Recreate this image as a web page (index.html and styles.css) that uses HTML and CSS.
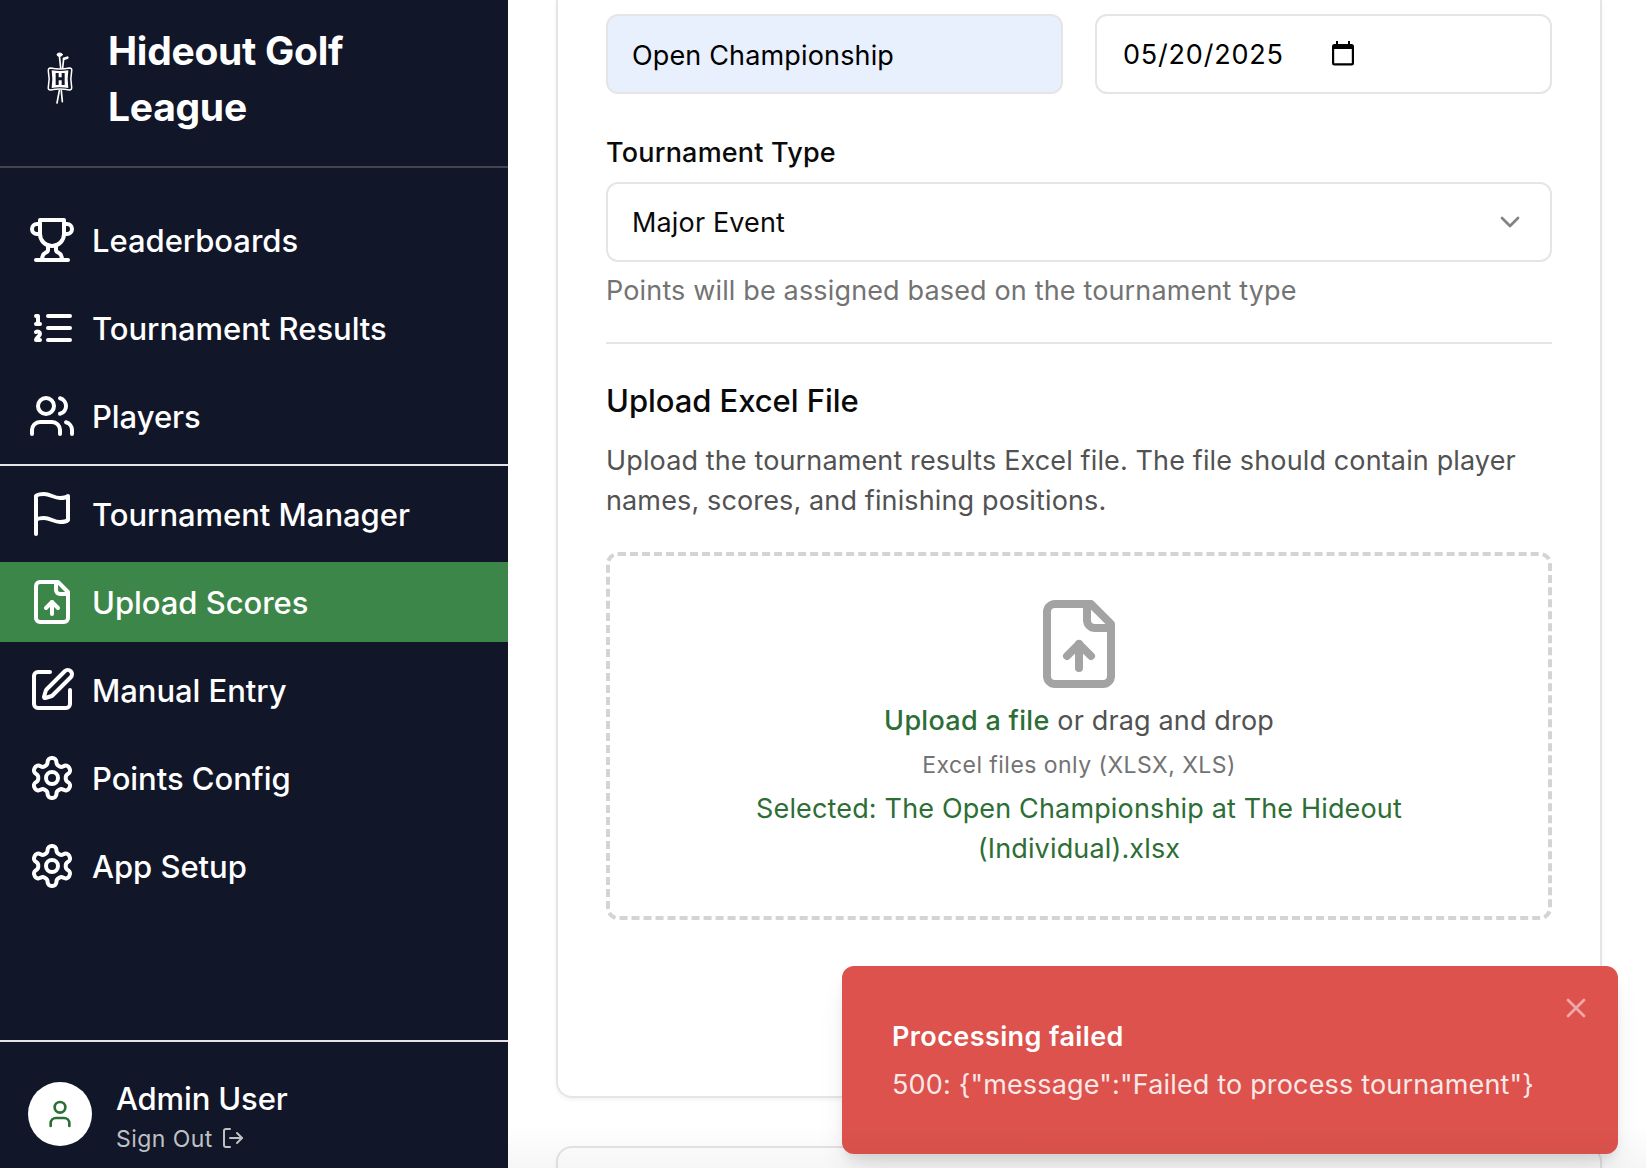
FILE: index.html
```html
<!DOCTYPE html>
<html lang="en">
<head>
<meta charset="utf-8">
<title>Hideout Golf League</title>
<link rel="stylesheet" href="styles.css">
</head>
<body>
<svg class="sprite" aria-hidden="true">
  <symbol id="trophy" viewBox="0 0 24 24"><path d="M6 9H4.5a2.5 2.5 0 0 1 0-5H6"/><path d="M18 9h1.5a2.5 2.5 0 0 0 0-5H18"/><path d="M4 22h16"/><path d="M10 14.66V17c0 .55-.47.98-.97 1.21C7.85 18.75 7 20.24 7 22"/><path d="M14 14.66V17c0 .55.47.98.97 1.21C16.15 18.75 17 20.24 17 22"/><path d="M18 2H6v7a6 6 0 0 0 12 0V2Z"/></symbol>
  <symbol id="list" viewBox="0 0 24 24"><path d="M10 6h11"/><path d="M10 12h11"/><path d="M10 18h11"/><path d="M4 6h1v4"/><path d="M4 10h2"/><path d="M6 18H4c0-1 2-2 2-3s-1-1.5-2-1"/></symbol>
  <symbol id="users" viewBox="0 0 24 24"><path d="M16 21v-2a4 4 0 0 0-4-4H6a4 4 0 0 0-4 4v2"/><circle cx="9" cy="7" r="4"/><path d="M22 21v-2a4 4 0 0 0-3-3.87"/><path d="M16 3.13a4 4 0 0 1 0 7.75"/></symbol>
  <symbol id="flag" viewBox="0 0 24 24"><path d="M4 15s1-1 4-1 5 2 8 2 4-1 4-1V3s-1 1-4 1-5-2-8-2-4 1-4 1z"/><path d="M4 22v-7"/></symbol>
  <symbol id="file-up" viewBox="0 0 24 24"><path d="M15 2H6a2 2 0 0 0-2 2v16a2 2 0 0 0 2 2h12a2 2 0 0 0 2-2V7Z"/><path d="M14 2v4a2 2 0 0 0 2 2h4"/><path d="M12 12v6"/><path d="m15 15-3-3-3 3"/></symbol>
  <symbol id="pen" viewBox="0 0 24 24"><path d="M11 3H5a2 2 0 0 0-2 2v14a2 2 0 0 0 2 2h14a2 2 0 0 0 2-2v-7"/><path d="M18.375 2.625a1 1 0 0 1 3 3l-9.013 9.014a2 2 0 0 1-.853.505l-2.873.84a.5.5 0 0 1-.62-.62l.84-2.873a2 2 0 0 1 .506-.852z"/></symbol>
  <symbol id="gear" viewBox="0 0 24 24"><path d="M12.22 2h-.44a2 2 0 0 0-2 2v.18a2 2 0 0 1-1 1.73l-.43.25a2 2 0 0 1-2 0l-.15-.08a2 2 0 0 0-2.73.73l-.22.38a2 2 0 0 0 .73 2.73l.15.1a2 2 0 0 1 1 1.72v.51a2 2 0 0 1-1 1.74l-.15.09a2 2 0 0 0-.73 2.73l.22.38a2 2 0 0 0 2.73.73l.15-.08a2 2 0 0 1 2 0l.43.25a2 2 0 0 1 1 1.73V20a2 2 0 0 0 2 2h.44a2 2 0 0 0 2-2v-.18a2 2 0 0 1 1-1.73l.43-.25a2 2 0 0 1 2 0l.15.08a2 2 0 0 0 2.73-.73l.22-.39a2 2 0 0 0-.73-2.73l-.15-.08a2 2 0 0 1-1-1.74v-.5a2 2 0 0 1 1-1.74l.15-.09a2 2 0 0 0 .73-2.73l-.22-.38a2 2 0 0 0-2.73-.73l-.15.08a2 2 0 0 1-2 0l-.43-.25a2 2 0 0 1-1-1.73V4a2 2 0 0 0-2-2z"/><circle cx="12" cy="12" r="3"/></symbol>
  <symbol id="user" viewBox="0 0 24 24"><path d="M19 21v-2a4 4 0 0 0-4-4H9a4 4 0 0 0-4 4v2"/><circle cx="12" cy="7" r="4"/></symbol>
  <symbol id="logout" viewBox="0 0 24 24"><path d="M9 21H5a2 2 0 0 1-2-2V5a2 2 0 0 1 2-2h4"/><path d="m16 17 5-5-5-5"/><path d="M21 12H9"/></symbol>
  <symbol id="chevron" viewBox="0 0 24 24"><path d="m6 9 6 6 6-6"/></symbol>
  <symbol id="close" viewBox="0 0 24 24"><path d="M18 6 6 18"/><path d="m6 6 12 12"/></symbol>
</svg>

<div class="app">
  <aside class="sidebar">
    <header class="brand">
      <svg class="logo" viewBox="-6 -3 192 240">
        <g fill="none" stroke="#fff" stroke-linecap="round">
          <path stroke-width="5" d="M88 46l4 38M101 56l-3 28M88 152l-7 37M94 152l3 33"/>
          <ellipse cx="89" cy="44" rx="8" ry="5" fill="#fff" stroke-width="3"/>
          <path stroke-width="8" d="M102 56l10-3"/>
          <path stroke-width="4.5" d="M62 84q28 6 56 0q9 0 7 9q-5 24 0 48q1 9-7 9q-28-6-56 0q-9 0-7-9q5-24 0-48q-1-9 7-9z"/>
        </g>
        <path fill="#fff" d="M65 91q25 4 50 0q-4 26 0 53q-25-4-50 0q4-27 0-53z"/>
        <path fill="#111628" d="M77 99h9v13h9v-13h9v36h-9v-14h-9v14h-9z"/>
      </svg>
      <h1 class="brand-name">Hideout Golf<br>League</h1>
    </header>
    <nav class="nav">
      <a class="nav-item"><svg class="icon"><use href="#trophy"/></svg><span>Leaderboards</span></a>
      <a class="nav-item"><svg class="icon"><use href="#list"/></svg><span>Tournament Results</span></a>
      <a class="nav-item"><svg class="icon"><use href="#users"/></svg><span>Players</span></a>
      <hr class="nav-divider">
      <a class="nav-item"><svg class="icon"><use href="#flag"/></svg><span>Tournament Manager</span></a>
      <a class="nav-item active"><svg class="icon"><use href="#file-up"/></svg><span>Upload Scores</span></a>
      <a class="nav-item"><svg class="icon"><use href="#pen"/></svg><span>Manual Entry</span></a>
      <a class="nav-item"><svg class="icon"><use href="#gear"/></svg><span>Points Config</span></a>
      <a class="nav-item"><svg class="icon"><use href="#gear"/></svg><span>App Setup</span></a>
    </nav>
    <footer class="account">
      <span class="avatar"><svg class="icon"><use href="#user"/></svg></span>
      <div>
        <div class="account-name">Admin User</div>
        <a class="sign-out"><span>Sign Out</span><svg class="icon"><use href="#logout"/></svg></a>
      </div>
    </footer>
  </aside>

  <main class="main">
    <section class="card">
      <div class="field-row">
        <div class="control autofilled"><span>Open Championship</span></div>
        <div class="control date"><span>05/20/2025</span>
          <svg class="calendar" viewBox="0 0 22 25"><path d="M4 0h2v3h10V0h2v3h1.500q2.500 0 2.500 2.500v16.500q0 2.500-2.500 2.500h-17q-2.500 0-2.500-2.500v-16.500q0-2.500 2.500-2.500H4zM2.200 8v14.200h17.600V8z"/></svg>
        </div>
      </div>
      <div class="label">Tournament Type</div>
      <div class="control select"><span>Major Event</span><svg class="icon"><use href="#chevron"/></svg></div>
      <p class="hint">Points will be assigned based on the tournament type</p>
      <hr class="rule">
      <h2 class="heading">Upload Excel File</h2>
      <p class="intro">Upload the tournament results Excel file. The file should contain player<br>names, scores, and finishing positions.</p>
      <div class="dropzone">
        <svg class="icon"><use href="#file-up"/></svg>
        <p class="drop-text"><span class="upload-link">Upload a file</span> or drag and drop</p>
        <p class="drop-note">Excel files only (XLSX, XLS)</p>
        <p class="drop-selected">Selected: The Open Championship at The Hideout<br>(Individual).xlsx</p>
      </div>
    </section>
    <section class="card next-card"></section>
  </main>
</div>

<div class="toast">
  <div class="toast-title">Processing failed</div>
  <div class="toast-text">500: {"message":"Failed to process tournament"}</div>
  <svg class="icon toast-close"><use href="#close"/></svg>
</div>
<div class="bottom-fade"></div>
</body>
</html>
```
FILE: styles.css
```css
* { box-sizing: border-box; }
body {
  position: relative;
  height: 1168px;
  margin: 0;
  overflow: hidden;
  background: #fff;
  color: #0a0a0a;
  font: 400 27px/40px Inter, "Liberation Sans", sans-serif;
  letter-spacing: 0.15px;
}
h1, h2, p { margin: 0; }
hr { width: 100%; height: 2px; margin: 0; border: 0; }
.sprite { display: none; }
.icon {
  display: block;
  flex: none;
  fill: none;
  stroke: currentColor;
  stroke-width: 2;
  stroke-linecap: round;
  stroke-linejoin: round;
}
.app { display: flex; height: 1168px; }

.sidebar {
  display: flex;
  flex-direction: column;
  flex: none;
  width: 508px;
  background: #111628;
  color: #fff;
}
.brand {
  display: flex;
  align-items: center;
  gap: 16px;
  height: 168px;
  padding: 23px 28px 31px;
  border-bottom: 2px solid #41454f;
}
.logo { flex: none; width: 64px; height: 80px; }
.brand-name {
  font-size: 39px;
  font-weight: 700;
  line-height: 56px;
  letter-spacing: -0.27px;
}
.nav { display: flex; flex-direction: column; gap: 8px; padding-top: 32px; }
.nav-item {
  display: flex;
  align-items: center;
  gap: 16px;
  height: 80px;
  padding: 0 28px;
  font-size: 31px;
  font-weight: 500;
  letter-spacing: -0.04px;
}
.nav-item span, .control span { padding-top: 2px; }
.nav-item .icon { width: 48px; height: 48px; }
.nav-item.active { background: #3d8649; }
.nav-divider { background: #e5e5e5; }
.account {
  display: flex;
  align-items: center;
  gap: 24px;
  height: 128px;
  margin-top: auto;
  padding: 32px 28px 14px;
  border-top: 2px solid #e8e2e4;
}
.avatar {
  display: flex;
  align-items: center;
  justify-content: center;
  width: 64px;
  height: 64px;
  border-radius: 50%;
  background: #fff;
  color: #2c6e35;
}
.avatar .icon { width: 32px; height: 32px; }
.account-name {
  padding-top: 1px;
  font-size: 31px;
  font-weight: 500;
  line-height: 47px;
  letter-spacing: -0.14px;
}
.sign-out {
  display: flex;
  align-items: center;
  gap: 8px;
  color: #bfc0c4;
  font-size: 23px;
  line-height: 32px;
  letter-spacing: 0.43px;
}
.sign-out span { height: 32px; padding-top: 1px; }
.sign-out .icon { width: 24px; height: 24px; }

.main { flex: 1; padding: 0 44px 0 48px; }
.card {
  height: 1098px;
  padding: 14px 48px 0;
  border: 2px solid #e5e5e5;
  border-top: 0;
  border-radius: 0 0 16px 16px;
  box-shadow: 0 2px 4px rgba(0, 0, 0, 0.05);
}
.next-card {
  height: 60px;
  margin-top: 48px;
  border-top: 2px solid #e5e5e5;
  border-radius: 16px;
}
.field-row { display: grid; grid-template-columns: 1fr 1fr; gap: 32px; }
.control {
  display: flex;
  align-items: center;
  height: 80px;
  padding: 0 24px;
  border: 2px solid #e5e5e5;
  border-radius: 12px;
}
.autofilled { padding-top: 1px; background: #e8effd; color: #000; }
.date { gap: 48px; padding-left: 26px; color: #000; letter-spacing: 0.8px; }
.calendar { width: 22px; height: 25px; margin-bottom: 2px; }
.label { margin: 45px 0 15px; font-weight: 500; line-height: 28px; letter-spacing: 0.2px; }
.select { justify-content: space-between; }
.select .icon { width: 32px; height: 32px; opacity: 0.5; }
.hint { margin: 9px 0 31px; color: #737373; }
.rule { background: #e5e5e5; }
.heading {
  margin: 33px 0 16px;
  font-size: 31px;
  font-weight: 500;
  line-height: 48px;
  letter-spacing: -0.06px;
}
.intro { color: #525252; letter-spacing: 0.13px; }
.dropzone {
  display: flex;
  flex-direction: column;
  align-items: center;
  gap: 8px;
  height: 368px;
  margin-top: 31px;
  padding-top: 40px;
  border: 4px dashed #d4d4d4;
  border-radius: 12px;
  text-align: center;
}
.dropzone .icon { width: 96px; height: 96px; color: #a3a3a3; }
.drop-text { margin-top: 1px; color: #525252; }
.upload-link { color: #2c6e35; font-weight: 500; letter-spacing: 0.3px; }
.drop-note { color: #737373; font-size: 23px; line-height: 32px; letter-spacing: 0.46px; }
.drop-selected { color: #2c6e35; }

.toast {
  position: absolute;
  top: 966px;
  left: 842px;
  width: 776px;
  height: 188px;
  padding: 51px 50px 49px;
  border-radius: 12px;
  background: #dd524c;
  color: #fff;
  box-shadow: 0 20px 30px -6px rgba(0, 0, 0, 0.1), 0 8px 12px -4px rgba(0, 0, 0, 0.1);
}
.toast-title { font-weight: 600; letter-spacing: 0.4px; }
.toast-text { margin-top: 8px; letter-spacing: 0.17px; white-space: nowrap; opacity: 0.87; }
.toast-close { position: absolute; top: 26px; right: 26px; width: 32px; height: 32px; opacity: 0.5; }
.bottom-fade {
  position: absolute;
  right: 0;
  bottom: 0;
  left: 508px;
  height: 44px;
  background: linear-gradient(rgba(0, 0, 0, 0), rgba(0, 0, 0, 0.035));
}
```
